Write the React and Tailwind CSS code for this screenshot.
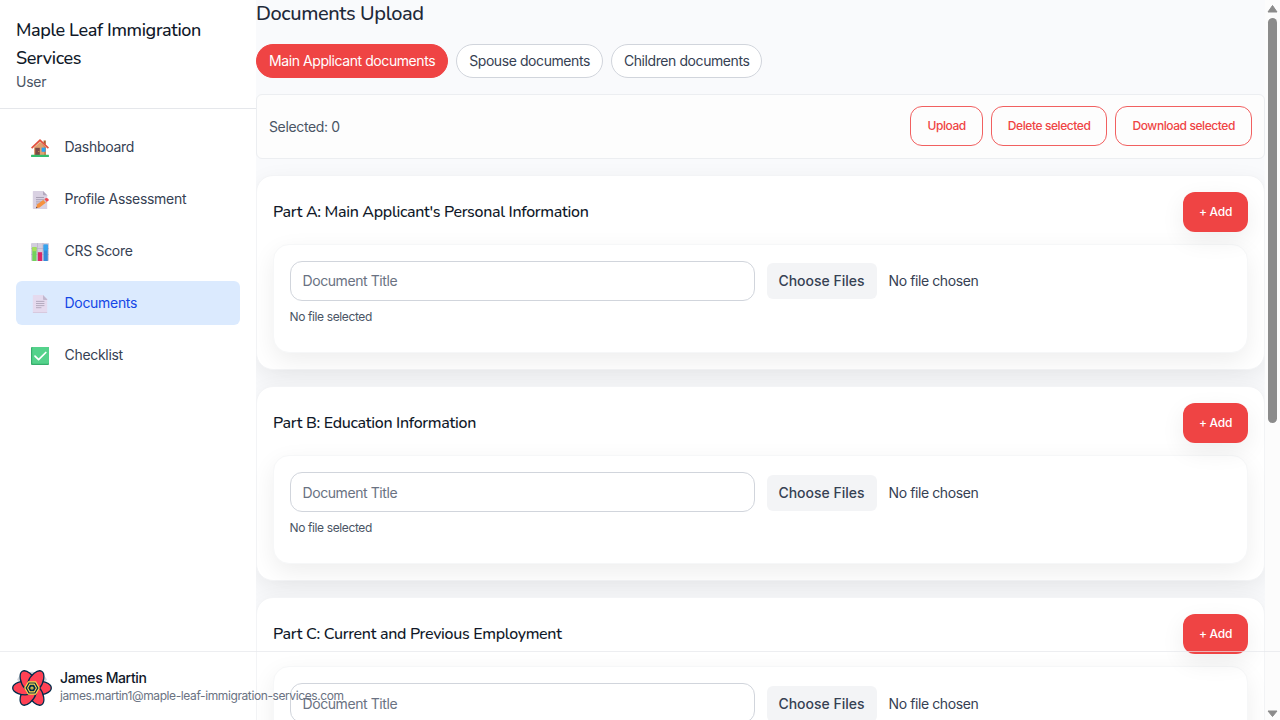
import React from "react";

const nunito = "font-['Nunito','Open_Sans',sans-serif] tracking-[-0.02em]";

function HouseIcon() {
  return (
    <svg viewBox="0 0 18 18" className="size-[18px]">
      <path d="M3 8.5 9 3l6 5.5V16H3z" fill="#e0a06f" />
      <path d="M9 3l6 5.5V16h-2V8z" fill="#c98559" />
      <path d="M12.6 1.5h2.2v4.6l-2.2-2z" fill="#a8622f" />
      <path d="M9 0 0 8.4l1.2 1.3L9 2.6l7.8 7.1L18 8.4z" fill="#e2503c" />
      <rect x="4.2" y="8.8" width="4.6" height="7.4" fill="#7c4a45" />
      <circle cx="7.8" cy="12.6" r=".5" fill="#e9bb56" />
      <rect x="10.6" y="8.6" width="3.9" height="4.2" fill="#28a4f0" />
      <rect y="15.8" width="18" height="2.1" rx=".4" fill="#35bd6c" />
    </svg>
  );
}

function MemoIcon() {
  return (
    <svg viewBox="0 0 18 18" className="size-[18px]">
      <path d="M2.6 0H12l4.2 4.2V18H2.6a.8.8 0 0 1-.8-.8V.8c0-.5.3-.8.8-.8z" fill="#d9d1e2" />
      <path d="M12 0l4.2 4.2H12.7a.7.7 0 0 1-.7-.7z" fill="#b2a9be" />
      <path d="M5 6.5h8M5 8.7h8M5 10.9h6M5 13h3" stroke="#9d94a9" strokeWidth=".8" />
      <path d="M5 17.2l1-3.6 7.5-5.5 2.3 2.9-7.2 5.4z" fill="#f6913f" />
      <path d="M5.4 15.7L5 17.2l1.6-.4z" fill="#494049" />
      <path d="M13.2 8.3l1.9-1.3c1.6-.3 3 1.2 2.6 2.5l-2.1 1.6z" fill="#f24b55" />
      <path d="M12.4 8.9l1-.8 2.3 2.9-1 .8z" fill="#c9bfd0" />
    </svg>
  );
}

function ChartIcon() {
  return (
    <svg viewBox="0 0 18 18" className="size-[18px]">
      <rect width="18" height="18" rx="1" fill="#d3cede" />
      <path d="M0 5.5h18M0 11.5h18M6.5 0v18M12 0v18" stroke="#b4adc2" strokeWidth=".6" />
      <rect x="1.3" y="4.2" width="4.2" height="13.8" fill="#72d35c" />
      <rect x="1.3" y="4.2" width="4.2" height="4" fill="#a7e05b" />
      <rect x="6.9" y="9.2" width="4.2" height="8.8" fill="#db2867" />
      <rect x="12.6" y="1.6" width="4.2" height="16.4" fill="#348bda" />
      <rect x="12.6" y="1.6" width="4.2" height="6" fill="#36a4ee" />
    </svg>
  );
}

function PageIcon() {
  return (
    <svg viewBox="0 0 18 18" className="size-[18px]">
      <path d="M2.6 0H12l4.2 4.2V18H2.6a.8.8 0 0 1-.8-.8V.8c0-.5.3-.8.8-.8z" fill="#e5daee" />
      <path d="M12 0l4.2 4.2v.9h-3.4a.8.8 0 0 1-.8-.8z" fill="#c2b8cf" />
      <path d="M1.9 17.6h14.2" stroke="#d1c2d8" strokeWidth=".8" />
      <path d="M5 6.4h8.4M5 8.5h8.4M5 10.6h8.4M5 12.7h5.4" stroke="#a79eb3" strokeWidth=".8" />
    </svg>
  );
}

function CheckIcon() {
  return (
    <svg viewBox="0 0 18 18" className="size-[18px]">
      <rect width="18" height="18" rx="1" fill="#36ad6c" />
      <rect x="1.2" width="16.8" height="16.8" rx=".8" fill="#54d28b" />
      <path d="M4 9.1l3.6 3.6 7.2-7.2" fill="none" stroke="#fff" strokeWidth="1.7" strokeLinecap="round" strokeLinejoin="round" />
    </svg>
  );
}

function FlowerLogo() {
  return (
    <svg viewBox="-20 -20 40 40" className="size-10 shrink-0">
      <path d="M-15-8C-11-19 11-19 15-8L0 0z" fill="#cfd3da" />
      {[0, 60, 120, 180, 240, 300].map((a) => (
        <path
          key={a}
          transform={`rotate(${a})`}
          d="M3-6.4C10-8 19.3-4.6 19.3 0S10 8 3 6.4z"
          fill="#ff4154"
          stroke="#002c4b"
          strokeWidth="1.3"
          strokeLinejoin="round"
        />
      ))}
      <path d="M-3.6-6.2h7.2L7.2 0 3.6 6.2h-7.2L-7.2 0z" fill="#002c4b" stroke="#ffd94c" strokeWidth="1.2" />
      <path d="M-2.2-3.9h4.4L4.4 0 2.2 3.9h-4.4L-4.4 0z" fill="#002c4b" stroke="#ffd94c" strokeWidth="1.1" />
      <circle r="1.6" fill="#ffd94c" />
      <circle r=".6" fill="#002c4b" />
    </svg>
  );
}

const navItems = [
  { label: "Dashboard", Icon: HouseIcon },
  { label: "Profile Assessment", Icon: MemoIcon },
  { label: "CRS Score", Icon: ChartIcon },
  { label: "Documents", Icon: PageIcon, active: true },
  { label: "Checklist", Icon: CheckIcon },
];

function Sidebar() {
  return (
    <aside className="relative z-10 flex h-full w-64 shrink-0 flex-col bg-white">
      <div className="h-[109px] border-b border-gray-200 px-4 pt-4">
        <h1 className={`${nunito} text-[18px] leading-7 font-medium text-gray-900`}>
          Maple Leaf Immigration
          <br />
          Services
        </h1>
        <p className="text-sm leading-5 tracking-[-0.28px] text-gray-600">User</p>
      </div>
      <nav className="flex flex-col gap-2 px-4 pt-4">
        {navItems.map(({ label, Icon, active }) => (
          <a
            key={label}
            className={`flex h-11 items-center rounded-md pl-[15px] text-sm tracking-[-0.3px] ${
              active ? "bg-blue-100 text-blue-700" : "text-gray-700"
            }`}
          >
            <span className="mr-[15.5px] pt-px">
              <Icon />
            </span>
            {label}
          </a>
        ))}
      </nav>
    </aside>
  );
}

const tabs = ["Main Applicant documents", "Spouse documents", "Children documents"];
const actions = ["Upload", "Delete selected", "Download selected"];
const sections = [
  "Part A: Main Applicant's Personal Information",
  "Part B: Education Information",
  "Part C: Current and Previous Employment",
];

function Section({ title }) {
  return (
    <section className="h-[195.25px] shrink-0 rounded-[17px] border border-[#f3f4f6] bg-white p-4 shadow-[0_8px_24px_rgba(0,0,0,0.07)]">
      <div className="flex items-center justify-between">
        <h3 className={`${nunito} text-base font-medium text-gray-900`}>{title}</h3>
        <button className="h-10 w-[65px] rounded-xl bg-[#ef4444] text-xs font-medium tracking-[-0.25px] text-white shadow-[0_8px_24px_rgba(0,0,0,0.07)]">
          + Add
        </button>
      </div>
      <div className="mt-3 h-[109.25px] rounded-2xl border border-[#f6f7f8] bg-white p-4 shadow-[0_8px_24px_rgba(0,0,0,0.07)]">
        <div className="-ml-[0.5px] flex items-center gap-3">
          <input
            placeholder="Document Title"
            className="h-10 w-[465px] rounded-xl border border-gray-300 bg-white px-3 text-sm tracking-[-0.42px] text-gray-700 placeholder:text-gray-500"
          />
          <div className="flex items-center gap-3 pt-px text-sm text-gray-700">
            <span className="flex h-9 w-[110px] items-center justify-center rounded-md bg-gray-100 font-medium">
              Choose Files
            </span>
            <span className="tracking-[-0.4px]">No file chosen</span>
          </div>
        </div>
        <p className="mt-2 -ml-[0.5px] text-xs leading-4 tracking-[-0.38px] text-gray-600">No file selected</p>
      </div>
    </section>
  );
}

export default function App() {
  return (
    <div className="relative flex h-[720px] w-[1280px] overflow-hidden bg-[#f9fafc] font-['Inter',sans-serif]">
      <Sidebar />
      <main className="flex h-full w-[1009px] shrink-0 flex-col">
        <h2 className={`${nunito} text-xl leading-7 font-medium text-gray-800`}>Documents Upload</h2>
        <div className="mt-4 flex shrink-0 gap-2">
          {tabs.map((tab, i) => (
            <button
              key={tab}
              className={`h-[34px] rounded-full border px-3 text-sm tracking-[-0.42px] ${
                i === 0 ? "border-[#ef4444] bg-[#ef4444] text-white" : "border-gray-300 bg-white text-gray-700"
              }`}
            >
              {tab}
            </button>
          ))}
        </div>
        <div className="mt-4 flex h-[64.5px] shrink-0 items-center justify-between rounded-md border border-[#eceef1] bg-[#fdfdfd] px-3">
          <span className="pt-px text-sm tracking-[-0.36px] text-gray-600">Selected: 0</span>
          <div className="flex gap-2">
            {actions.map((a) => (
              <button
                key={a}
                className="h-10 rounded-xl border border-[#ef4444]/85 px-4 text-xs font-medium tracking-[-0.42px] text-[#ef4444]"
              >
                {a}
              </button>
            ))}
          </div>
        </div>
        <div className="mt-[16.25px] flex flex-col gap-4">
          {sections.map((s) => (
            <Section key={s} title={s} />
          ))}
        </div>
      </main>
      <div className="relative z-10 flex h-full w-[15px] shrink-0 flex-col items-center bg-[#fcfcfc]">
        <svg viewBox="0 0 15 18" className="h-[18px] w-[15px] shrink-0">
          <path d="M7.5 5.5L12 12H3z" fill="#8b8b8b" stroke="#8b8b8b" strokeLinejoin="round" />
        </svg>
        <div className="h-[405px] w-[9px] rounded-full bg-[#8b8b8b]" />
        <svg viewBox="0 0 15 18" className="mt-auto h-[18px] w-[15px] shrink-0">
          <path d="M7.5 14.5L12 9H3z" fill="#8b8b8b" stroke="#8b8b8b" strokeLinejoin="round" />
        </svg>
      </div>
      <footer className="absolute bottom-0 left-0 z-20 flex h-[69px] w-full items-center gap-2 border-t border-gray-200/70 px-3 pt-1">
        <FlowerLogo />
        <div className="-mt-1 flex flex-col">
          <span className="text-sm leading-5 font-medium tracking-[-0.38px] text-gray-900">James Martin</span>
          <span className="text-xs leading-4 tracking-[-0.4px] text-gray-500">
            james.martin1@maple-leaf-immigration-services.com
          </span>
        </div>
      </footer>
    </div>
  );
}
